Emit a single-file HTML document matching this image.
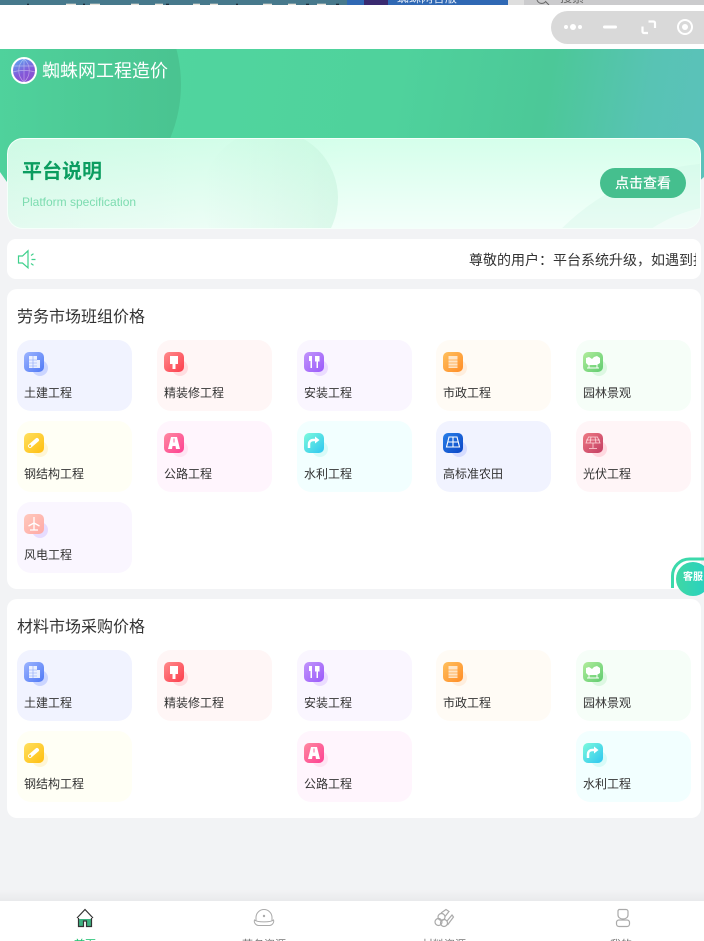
<!DOCTYPE html>
<html lang="zh"><head><meta charset="utf-8"><title>蜘蛛网工程造价</title>
<style>
*{box-sizing:border-box;margin:0;padding:0}
html,body{width:704px;height:941px;overflow:hidden;background:#f2f3f5;font-family:"Liberation Sans","Noto Sans CJK SC",sans-serif;color:#333}
.a{position:absolute}
#root{position:relative;width:704px;height:941px;overflow:hidden}
.sec{position:absolute;left:7px;width:694px;background:#fff;border-radius:10px}
.st{position:absolute;left:17px;font-size:16px;line-height:22px;color:#333}
.c{position:absolute;width:115px;height:71px;border-radius:14px}
.c .s{position:absolute;left:15px;top:20px;width:16px;height:16px;border-radius:50%}
.c .i{position:absolute;left:7px;top:12px;width:20px;height:20px;border-radius:5px;overflow:hidden}
.c .i svg{display:block;width:20px;height:20px}
.c .t{position:absolute;left:7px;top:44px;font-size:12px;line-height:18px;color:#333;white-space:nowrap}
.tab{position:absolute;top:938px;font-size:11px;line-height:14px;color:#777;transform:translateX(-50%);white-space:nowrap}
</style></head><body><div id="root">

<div class="a" style="left:0;top:0;width:347px;height:5px;background:#47798c"></div>
<svg class="a" style="left:0;top:0" width="347" height="5" fill="#e8e4dc">
<rect x="66" y="3.700" width="10" height="1.300"/><rect x="90" y="3.700" width="10" height="1.300"/><rect x="131" y="3.700" width="8" height="1.300"/><rect x="155" y="3.700" width="8" height="1.300"/><rect x="193" y="3.700" width="7" height="1.300"/><rect x="210" y="3.700" width="8" height="1.300"/><rect x="263" y="3.700" width="9" height="1.300"/><rect x="288" y="3.700" width="8" height="1.300"/><rect x="317" y="3.700" width="9" height="1.300"/>
<rect x="27" y="3.700" width="2" height="1.300" fill="#1c2c3a"/><rect x="83" y="3.700" width="2" height="1.300" fill="#1c2c3a"/><rect x="166" y="3.700" width="3" height="1.300" fill="#1c2c3a"/><rect x="236" y="3.700" width="2" height="1.300" fill="#1c2c3a"/><rect x="306" y="3.700" width="3" height="1.300" fill="#1c2c3a"/><rect x="336" y="3.700" width="3" height="1.300" fill="#1c2c3a"/>
</svg>
<div class="a" style="left:347px;top:0;width:161px;height:5px;background:#2f68b4"></div>
<div class="a" style="left:364px;top:0;width:24px;height:5px;background:#3a2a70"></div>
<div class="a" style="left:397px;top:-9px;font-size:12px;line-height:14px;color:#dfe8f5">蜘蛛网各版</div>
<div class="a" style="left:508px;top:0;width:196px;height:5px;background:#cbcbcd"></div>
<div class="a" style="left:508px;top:0;width:16px;height:5px;background:#dedede"></div>
<div class="a" style="left:560px;top:-9px;font-size:12px;line-height:14px;color:#666">搜索</div>
<svg class="a" style="left:535px;top:0" width="16" height="6"><path d="M2 0a5 5 0 0 0 9 1M11 2l3 3" fill="none" stroke="#666" stroke-width="1"/></svg>

<div class="a" style="left:0;top:5px;width:704px;height:44px;background:#fff"></div>
<div class="a" style="left:551px;top:11px;width:170px;height:33px;border-radius:17px;background:#d9d9d9"></div>
<svg class="a" style="left:551px;top:11px" width="153" height="33" fill="#fff">
<circle cx="15" cy="16" r="2"/><circle cx="22" cy="16" r="3"/><circle cx="29" cy="16" r="2"/>
<rect x="52" y="14.500" width="14" height="3" rx="1.500"/>
<path d="M91.500 15.500v5a1.500 1.500 0 0 0 1.500 1.500H97M97.500 10.500h5a1.500 1.500 0 0 1 1.500 1.500v5" fill="none" stroke="#fff" stroke-width="2.200"/>
<circle cx="134" cy="16" r="7" fill="none" stroke="#fff" stroke-width="2"/><circle cx="134" cy="16" r="3"/>
</svg>

<div class="a" style="left:0;top:49px;width:704px;height:151px;overflow:hidden;background:linear-gradient(100deg,#51d7a0 0%,#4fd29c 55%,#4cc898 76%,#58c3b4 90%,#5bc2bb 100%);clip-path:polygon(0 0,704px 0,704px 128px,697px 134px,697px 151px,7px 151px,7px 133px,0 123px)">
  <div class="a" style="left:-96px;top:-103px;width:277px;height:277px;border-radius:50%;background:linear-gradient(90deg,rgba(72,190,140,0) 10%,rgba(72,190,140,.75) 100%)"></div>
</div>

<svg class="a" style="left:11px;top:57px" width="26" height="27" viewBox="0 0 26 27">
<defs><linearGradient id="gl" x1=".2" y1="0" x2=".7" y2="1"><stop offset="0" stop-color="#5aaaf2"/><stop offset=".6" stop-color="#8458d8"/><stop offset="1" stop-color="#8a50d0"/></linearGradient></defs>
<ellipse cx="13" cy="13.500" rx="12" ry="12.500" fill="url(#gl)" stroke="#fff" stroke-width="2"/>
<path d="M13 2v23M3 9h20M2 15c6-2 16-2 22 0M13 2C6 8 6 19 13 25M13 2c7 6 7 17 0 23" fill="none" stroke="#fff" stroke-opacity=".45" stroke-width=".7"/>
</svg>
<div class="a" style="left:42px;top:59px;font-size:18px;line-height:25px;color:#fff;white-space:nowrap">蜘蛛网工程造价</div>

<div class="a" style="left:7px;top:138px;width:694px;height:91px;border-radius:16px;overflow:hidden;background:linear-gradient(180deg,#d5ffeb 0%,#f3fffa 100%);border:1px solid #f5fffa">
  <div class="a" style="left:0;top:0;width:340px;height:91px;background:linear-gradient(90deg,rgba(190,240,215,.3),rgba(190,240,215,0))"></div>
  <div class="a" style="left:194px;top:-9px;width:136px;height:136px;border-radius:50%;background:linear-gradient(90deg,rgba(190,240,215,0),rgba(190,240,215,.45))"></div>
  <div class="a" style="left:488px;top:24px;width:448px;height:448px;border-radius:50%;background:rgba(200,240,225,.28)"></div>
  <div class="a" style="left:580px;top:66px;width:284px;height:284px;border-radius:50%;background:rgba(255,255,255,.4)"></div>
</div>
<div class="a" style="left:22px;top:158px;font-size:20px;line-height:28px;font-weight:700;color:#0b9d60;white-space:nowrap">平台说明</div>
<div class="a" style="left:22px;top:194px;font-size:12px;line-height:17px;color:#7ddcb0;white-space:nowrap">Platform specification</div>
<div class="a" style="left:600px;top:168px;width:86px;height:30px;border-radius:15px;background:#45bf8e;color:#fff;font-size:14px;line-height:30px;text-align:center;font-weight:500">点击查看</div>

<div class="a" style="left:7px;top:239px;width:694px;height:40px;border-radius:9px;background:#fff;overflow:hidden"></div>
<svg class="a" style="left:17px;top:249px" width="20" height="21" viewBox="0 0 20 21" fill="none" stroke="#3fd08c" stroke-width="1.200">
<path d="M1.500 7h4L11 1.800v17L5.500 14h-4z"/><path d="M14 6.500l2.500-1.800M14.500 10.500H18.500M14 14.500l2.500 1.800"/>
</svg>
<div class="a" style="left:469px;top:250px;width:227px;height:20px;overflow:hidden;font-size:14px;line-height:20px;color:#333;white-space:nowrap">尊敬的用户：平台系统升级，如遇到报错请联系客服</div>

<div class="sec" style="top:289px;height:300px"></div>
<div class="st" style="top:307px">劳务市场班组价格</div>

<div class="c" style="left:17px;top:340px;background:#f1f3ff"><div class="s" style="background:#cbd5ff"></div><div class="i" style="background:linear-gradient(135deg,#9db5ff,#4f78f5)"><svg viewBox="0 0 20 20"><path d="M5 4h8v12H5zM13 8h3v8h-3z" fill="#fff" fill-opacity=".85"/><path d="M5 8h8M5 11h8M5 14h8M9 4v12" stroke="#88a4fa" stroke-width=".6"/></svg></div><div class="t">土建工程</div></div>
<div class="c" style="left:157px;top:340px;background:#fff6f6"><div class="s" style="background:#ffdde0"></div><div class="i" style="background:linear-gradient(135deg,#ff8c8c,#fc3d4c)"><svg viewBox="0 0 20 20"><path d="M6 4h8v8h-2.500v5h-3v-5H6z" fill="#fff"/></svg></div><div class="t">精装修工程</div></div>
<div class="c" style="left:297px;top:340px;background:#faf6ff"><div class="s" style="background:#ebdcff"></div><div class="i" style="background:linear-gradient(135deg,#c295fb,#9a59fa)"><svg viewBox="0 0 20 20"><path d="M5 4v5h1.500v7h1.500V4zM11 4h4.500v5.500H14V16h-1.500V9.500H11z" fill="#fff"/></svg></div><div class="t">安装工程</div></div>
<div class="c" style="left:436px;top:340px;background:#fffbf5"><div class="s" style="background:#ffeedd"></div><div class="i" style="background:linear-gradient(135deg,#ffc05e,#ff8c26)"><svg viewBox="0 0 20 20"><path d="M5.500 4h9v12h-9z" fill="#fff" fill-opacity=".7"/><path d="M5.500 8h9M5.500 11h9M5.500 14h9" stroke="#ffa540" stroke-width=".8"/></svg></div><div class="t">市政工程</div></div>
<div class="c" style="left:576px;top:340px;background:#f6fef8"><div class="s" style="background:#ddf8e2"></div><div class="i" style="background:linear-gradient(135deg,#b2ed9c,#5fcb6f)"><svg viewBox="0 0 20 20"><path d="M3 6l3-1 3 2 2-2 3-1 3 2v5l-3 2H5l-2-2z" fill="#fff"/><path d="M6 13v3M14 13v3M4 16h12" stroke="#fff"/></svg></div><div class="t">园林景观</div></div>

<div class="c" style="left:17px;top:421px;background:#fffff5"><div class="s" style="background:#fff6d5"></div><div class="i" style="background:linear-gradient(135deg,#ffe05f,#ffbe0f)"><svg viewBox="0 0 20 20"><path d="M6 13l7-6" stroke="#fff" stroke-width="4" stroke-linecap="round"/><circle cx="6" cy="13" r="1.200" fill="#ffd040"/></svg></div><div class="t">钢结构工程</div></div>
<div class="c" style="left:157px;top:421px;background:#fff5fd"><div class="s" style="background:#ffe4f3"></div><div class="i" style="background:linear-gradient(135deg,#ff8aa0,#fd3f92)"><svg viewBox="0 0 20 20"><path d="M7 4h6l3 12h-4l-.5-3h-3L8 16H4z" fill="#fff"/><path d="M10 5.500v4" stroke="#fd5f98"/></svg></div><div class="t">公路工程</div></div>
<div class="c" style="left:297px;top:421px;background:#f2ffff"><div class="s" style="background:#d8fbf8"></div><div class="i" style="background:linear-gradient(135deg,#7dfadc,#2dc5f0)"><svg viewBox="0 0 20 20"><path d="M5 15v-4a4 4 0 0 1 4-4h3" fill="none" stroke="#fff" stroke-width="2.500"/><path d="M11 3.500l4.500 3.500L11 10.500z" fill="#fff"/></svg></div><div class="t">水利工程</div></div>
<div class="c" style="left:436px;top:421px;background:#f1f3ff"><div class="s" style="background:#d6dcff"></div><div class="i" style="background:linear-gradient(135deg,#2a80e8,#0a45c5)"><svg viewBox="0 0 20 20"><path d="M6 4h8l2.500 10h-13zM10 4v10M4.500 9h11" fill="none" stroke="#fff" stroke-width="1.100"/></svg></div><div class="t">高标准农田</div></div>
<div class="c" style="left:576px;top:421px;background:#fff5f7"><div class="s" style="background:#ffd8e0"></div><div class="i" style="background:linear-gradient(135deg,#ee7b84,#c23c62)"><svg viewBox="0 0 20 20"><path d="M5.500 4h9l2.500 6H3zM3 7h14M8 4l-1 6M12 4l1 6M10 10v5M6 15.500h8" fill="none" stroke="#ffd8dc" stroke-width=".8"/></svg></div><div class="t">光伏工程</div></div>

<div class="c" style="left:17px;top:502px;background:#faf6ff"><div class="s" style="background:#e6dcff"></div><div class="i" style="background:linear-gradient(135deg,#ffc9bd,#ffa9a5)"><svg viewBox="0 0 20 20"><path d="M10 9V3M10 9l-5.500 3M10 9l5.500 3M10 9v7M6 16h8" fill="none" stroke="#fff" stroke-width="1.300"/></svg></div><div class="t">风电工程</div></div>

<div class="sec" style="top:599px;height:219px"></div>
<div class="st" style="top:617px">材料市场采购价格</div>

<div class="c" style="left:17px;top:650px;background:#f1f3ff"><div class="s" style="background:#cbd5ff"></div><div class="i" style="background:linear-gradient(135deg,#9db5ff,#4f78f5)"><svg viewBox="0 0 20 20"><path d="M5 4h8v12H5zM13 8h3v8h-3z" fill="#fff" fill-opacity=".85"/><path d="M5 8h8M5 11h8M5 14h8M9 4v12" stroke="#88a4fa" stroke-width=".6"/></svg></div><div class="t">土建工程</div></div>
<div class="c" style="left:157px;top:650px;background:#fff6f6"><div class="s" style="background:#ffdde0"></div><div class="i" style="background:linear-gradient(135deg,#ff8c8c,#fc3d4c)"><svg viewBox="0 0 20 20"><path d="M6 4h8v8h-2.500v5h-3v-5H6z" fill="#fff"/></svg></div><div class="t">精装修工程</div></div>
<div class="c" style="left:297px;top:650px;background:#faf6ff"><div class="s" style="background:#ebdcff"></div><div class="i" style="background:linear-gradient(135deg,#c295fb,#9a59fa)"><svg viewBox="0 0 20 20"><path d="M5 4v5h1.500v7h1.500V4zM11 4h4.500v5.500H14V16h-1.500V9.500H11z" fill="#fff"/></svg></div><div class="t">安装工程</div></div>
<div class="c" style="left:436px;top:650px;background:#fffbf5"><div class="s" style="background:#ffeedd"></div><div class="i" style="background:linear-gradient(135deg,#ffc05e,#ff8c26)"><svg viewBox="0 0 20 20"><path d="M5.500 4h9v12h-9z" fill="#fff" fill-opacity=".7"/><path d="M5.500 8h9M5.500 11h9M5.500 14h9" stroke="#ffa540" stroke-width=".8"/></svg></div><div class="t">市政工程</div></div>
<div class="c" style="left:576px;top:650px;background:#f6fef8"><div class="s" style="background:#ddf8e2"></div><div class="i" style="background:linear-gradient(135deg,#b2ed9c,#5fcb6f)"><svg viewBox="0 0 20 20"><path d="M3 6l3-1 3 2 2-2 3-1 3 2v5l-3 2H5l-2-2z" fill="#fff"/><path d="M6 13v3M14 13v3M4 16h12" stroke="#fff"/></svg></div><div class="t">园林景观</div></div>

<div class="c" style="left:17px;top:731px;background:#fffff5"><div class="s" style="background:#fff6d5"></div><div class="i" style="background:linear-gradient(135deg,#ffe05f,#ffbe0f)"><svg viewBox="0 0 20 20"><path d="M6 13l7-6" stroke="#fff" stroke-width="4" stroke-linecap="round"/><circle cx="6" cy="13" r="1.200" fill="#ffd040"/></svg></div><div class="t">钢结构工程</div></div>
<div class="c" style="left:297px;top:731px;background:#fff5fd"><div class="s" style="background:#ffe4f3"></div><div class="i" style="background:linear-gradient(135deg,#ff8aa0,#fd3f92)"><svg viewBox="0 0 20 20"><path d="M7 4h6l3 12h-4l-.5-3h-3L8 16H4z" fill="#fff"/><path d="M10 5.500v4" stroke="#fd5f98"/></svg></div><div class="t">公路工程</div></div>
<div class="c" style="left:576px;top:731px;background:#f2ffff"><div class="s" style="background:#d8fbf8"></div><div class="i" style="background:linear-gradient(135deg,#7dfadc,#2dc5f0)"><svg viewBox="0 0 20 20"><path d="M5 15v-4a4 4 0 0 1 4-4h3" fill="none" stroke="#fff" stroke-width="2.500"/><path d="M11 3.500l4.500 3.500L11 10.500z" fill="#fff"/></svg></div><div class="t">水利工程</div></div>

<svg class="a" style="left:670px;top:556px" width="34" height="34"><path d="M2.500 32V20A17 17 0 0 1 19.500 3H34" fill="none" stroke="#3cd9ab" stroke-width="3"/></svg>
<div class="a" style="left:676px;top:562px;width:34px;height:34px;border-radius:50%;background:linear-gradient(90deg,#40d8a4,#25d0c4)"></div>
<div class="a" style="left:683px;top:571px;font-size:10px;line-height:14px;font-weight:700;color:#fff;white-space:nowrap">客服</div>

<div class="a" style="left:0;top:890px;width:704px;height:11px;background:linear-gradient(180deg,#f2f3f5,#e9eaec)"></div>
<div class="a" style="left:0;top:901px;width:704px;height:40px;background:#fff;overflow:hidden"></div>

<svg class="a" style="left:75px;top:908px" width="20" height="20" viewBox="0 0 20 20">
<path d="M3 10L10 2l7 8v8H3z" fill="#fff"/>
<path d="M3.500 11H16.500V18H12V12.500H8V18H3.500z" fill="#3eb281"/>
<path d="M2 10L10 1.500 18 10M3.500 10v8.500h5V13h3v5.500h5V10" fill="none" stroke="#333" stroke-width="1.200"/>
</svg>
<svg class="a" style="left:253px;top:908px" width="22" height="20" viewBox="0 0 22 20" fill="none" stroke="#aaa" stroke-width="1">
<path d="M3 13V9.500A8 8 0 0 1 19 9.500V13"/><path d="M1.500 12c3 2.500 16 2.500 19 0 1 2.500-1.500 5.500-4 5.500h-11c-2.500 0-5-3-4-5.500z"/><circle cx="11" cy="8" r=".7" fill="#999"/>
</svg>
<svg class="a" style="left:433px;top:908px" width="22" height="20" viewBox="0 0 22 20" fill="none" stroke="#aaa" stroke-width="1.200">
<circle cx="5.500" cy="14" r="3.500"/><circle cx="11" cy="15" r="3.500"/><circle cx="8.500" cy="9" r="3.500"/><path d="M8 5l5-3.500 3 2-4 5M14 13l5-6 1.500 2-6 8"/>
</svg>
<svg class="a" style="left:614px;top:908px" width="18" height="20" viewBox="0 0 18 20" fill="none" stroke="#aaa" stroke-width="1.200">
<path d="M5 1.500h7a2 2 0 0 1 2 2V7c0 2.500-2.500 4-5 4S4 9.500 4 7V3.500a2 2 0 0 1 1-2z"/><rect x="2.500" y="12" width="13" height="6.500" rx="2.500"/>
</svg>
<div class="tab" style="left:85px;color:#18bf6c">首页</div>
<div class="tab" style="left:264px">劳务资源</div>
<div class="tab" style="left:444px">材料资源</div>
<div class="tab" style="left:621px">我的</div>
</div></body></html>
